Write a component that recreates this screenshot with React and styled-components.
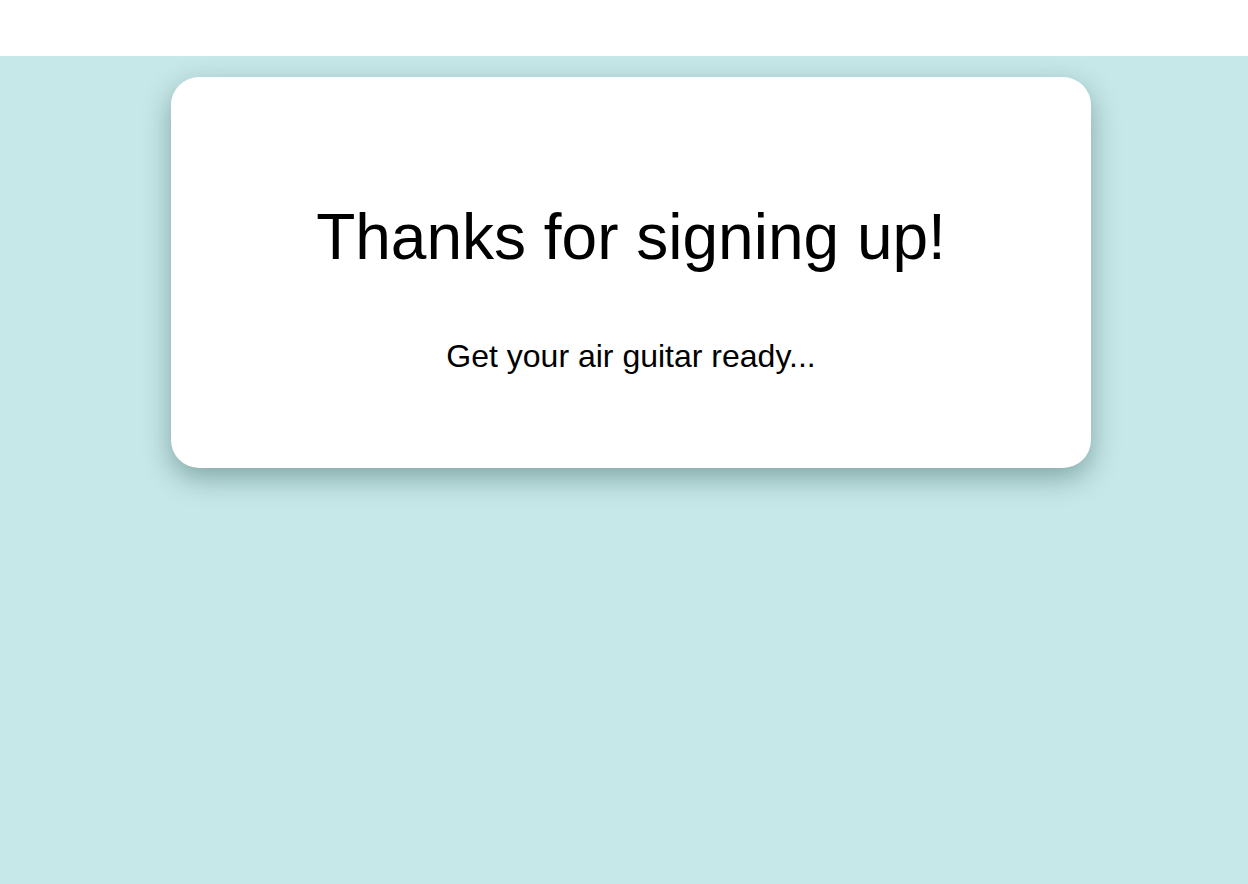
import React from 'react';
import styled, { createGlobalStyle } from 'styled-components';

const GlobalStyle = createGlobalStyle`
  html, body {
    margin: 0;
    padding: 0;
    background: #ffffff;
  }
  body {
    font-family: "Liberation Sans", Arial, sans-serif;
    color: #000;
  }
`;

const Page = styled.div`
  min-height: 884px;
  display: flex;
  flex-direction: column;
`;

const TopBar = styled.header`
  height: 56px;
  background: #ffffff;
`;

const Main = styled.main`
  flex: 1;
  background: #c6e8e9;
  padding: 21px 0 0 171px;
`;

const Card = styled.section`
  width: 920px;
  height: 391px;
  box-sizing: border-box;
  padding-top: 124px;
  background: #ffffff;
  border-radius: 28px;
  box-shadow: 0 10px 28px rgba(0, 40, 40, 0.35);
  display: flex;
  flex-direction: column;
  align-items: center;
  text-align: center;
`;

const Title = styled.h1`
  margin: 0;
  font-size: 64px;
  font-weight: 400;
  line-height: 73px;
`;

const Subtitle = styled.p`
  margin: 64px 0 0;
  font-size: 32px;
  line-height: 37px;
`;

export default function App() {
  return (
    <Page>
      <GlobalStyle />
      <TopBar />
      <Main>
        <Card>
          <Title>Thanks for signing up!</Title>
          <Subtitle>Get your air guitar ready...</Subtitle>
        </Card>
      </Main>
    </Page>
  );
}
